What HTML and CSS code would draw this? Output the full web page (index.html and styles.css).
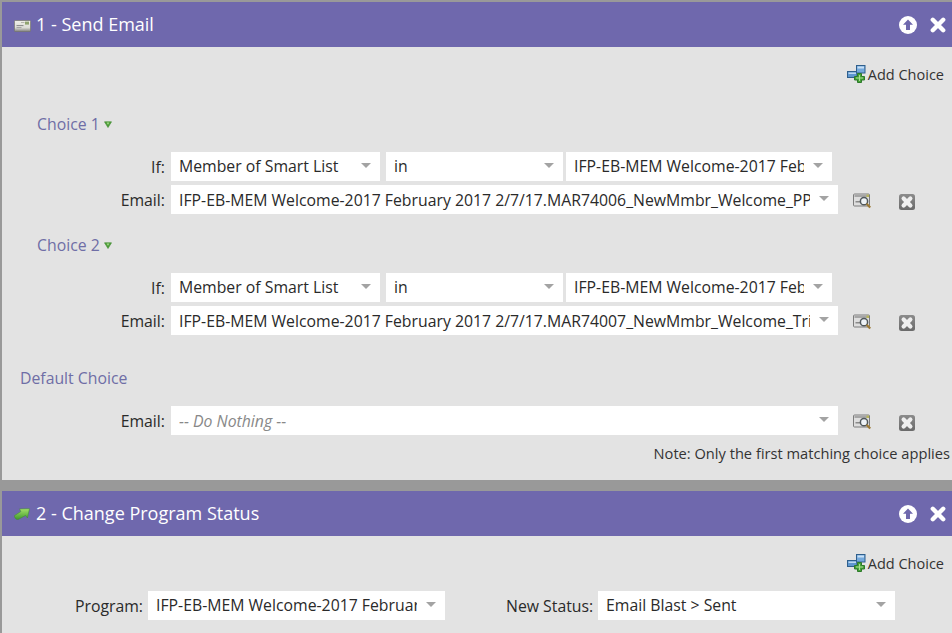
FILE: index.html
```html
<!DOCTYPE html>
<html lang="en">
<head>
<meta charset="utf-8">
<title>Flow steps</title>
<link rel="stylesheet" href="styles.css">
</head>
<body>
<svg class="defs" width="0" height="0" aria-hidden="true">
  <defs>
    <linearGradient id="g-del" x1="0" y1="0" x2="0" y2="1">
      <stop offset="0" stop-color="#8c8c8c"/>
      <stop offset="1" stop-color="#6a6a6a"/>
    </linearGradient>
    <linearGradient id="g-mail" x1="0" y1="0" x2="0" y2="1">
      <stop offset="0" stop-color="#f0f0ea"/>
      <stop offset="0.65" stop-color="#dcdcd6"/>
      <stop offset="1" stop-color="#7e7e7a"/>
    </linearGradient>
    <linearGradient id="g-arrow" x1="0" y1="0" x2="0" y2="1">
      <stop offset="0" stop-color="#a5e06a"/>
      <stop offset="1" stop-color="#3f9a2c"/>
    </linearGradient>
    <symbol id="i-add" viewBox="0 0 20 18">
      <rect x="0.5" y="6.5" width="9.5" height="6" fill="#5f97cf" stroke="#2f5f8c"/>
      <rect x="1.5" y="7.5" width="7.5" height="1.5" fill="#bcd8f2"/>
      <rect x="9.5" y="0.5" width="8.5" height="7.5" fill="#74a9dc" stroke="#2f5f8c"/>
      <rect x="10.5" y="1.5" width="6.5" height="2" fill="#c8e0f5"/>
      <path d="M10.5 8.5h4v3h3v3.5h-3v2.5h-4V15h-3v-3.5h3z" fill="#46a238" stroke="#2c7a2a"/>
      <path d="M12 10h1v2.5h3v1h-3V16h-1v-2.5H9v-1h3z" fill="#a9e092"/>
    </symbol>
    <symbol id="i-preview" viewBox="0 0 19 16">
      <rect x="0.5" y="1" width="16" height="12" rx="1" fill="#dedede" stroke="#7c7c7c"/>
      <rect x="1.5" y="2" width="14" height="2" fill="#a6a6a6"/>
      <rect x="2.5" y="8" width="5" height="1.5" fill="#8a8a8a"/>
      <circle cx="11" cy="8.2" r="3.6" fill="#eef3f6" stroke="#50585c" stroke-width="1.5"/>
      <rect x="13.5" y="1.5" width="2.5" height="2.5" fill="#b7b45e"/>
      <path d="M13.6 10.8l3.6 3.8" stroke="#9c7a35" stroke-width="2.2"/>
    </symbol>
    <symbol id="i-del" viewBox="0 0 16 16">
      <rect x="0" y="0" width="16" height="16" rx="2.5" fill="url(#g-del)"/>
      <path d="M4.6 4.6l6.8 6.8M11.4 4.6l-6.8 6.8" stroke="#efefef" stroke-width="4.2" stroke-linecap="round"/>
    </symbol>
    <symbol id="i-up" viewBox="0 0 18 18">
      <circle cx="9" cy="9" r="9" fill="#fff"/>
      <path d="M9 3.5l5 5.2h-3V14H7V8.7H4z" fill="#6f68ad"/>
    </symbol>
    <symbol id="i-close" viewBox="0 0 16 16">
      <path d="M2.8 2.8l10.4 10.4M13.2 2.8L2.8 13.2" stroke="#fff" stroke-width="4.4" stroke-linecap="round"/>
    </symbol>
    <symbol id="i-mail" viewBox="0 0 17 12">
      <rect x="0.4" y="0.4" width="16.2" height="11.2" rx="1.2" fill="url(#g-mail)" stroke="#77776f" stroke-width="0.8"/>
      <rect x="2.5" y="5" width="7" height="1.1" fill="#8f8f8f"/>
      <rect x="2.5" y="7" width="5" height="1.1" fill="#a5a5a5"/>
      <rect x="11" y="1.6" width="4" height="3" fill="#8fa36e"/>
      <rect x="7" y="2" width="3.5" height="1" fill="#b5b5ad"/>
    </symbol>
    <symbol id="i-status" viewBox="0 0 16 12">
      <path d="M0.5 7.6L6.8 3.6 5.6 0.9l9.9-.2L13.4 10l-1.8-2.6-7 3.9C2.4 12.2 0.2 9.8 0.5 7.6z" fill="url(#g-arrow)" stroke="#3c8f2a" stroke-width="0.5"/>
    </symbol>
    <symbol id="i-caret" viewBox="0 0 8 7">
      <path d="M0.5 0.8h7L4 6.5z" fill="#4f9e3a" stroke="#3d8a2e" stroke-width="0.6" stroke-linejoin="round"/>
      <path d="M2.6 1.6h2.8L4 3.8z" fill="#a5dc8c"/>
    </symbol>
  </defs>
</svg>

<main class="canvas">
  <section class="step step-one">
    <header class="step-head">
      <svg class="head-icon mail-icon"><use href="#i-mail"/></svg>
      <h2 class="step-title">1 - Send Email</h2>
      <svg class="head-up"><use href="#i-up"/></svg>
      <svg class="head-close"><use href="#i-close"/></svg>
    </header>
    <div class="step-body">
      <div class="add-row"><svg class="add-icon"><use href="#i-add"/></svg><span>Add Choice</span></div>

      <div class="choice-head">Choice 1<svg class="caret"><use href="#i-caret"/></svg></div>
      <div class="form-row row-if">
        <label class="field-label">If:</label>
        <div class="select sel-a"><span class="sel-text">Member of Smart List</span><i class="arrow"></i></div>
        <div class="select sel-b"><span class="sel-text">in</span><i class="arrow"></i></div>
        <div class="select sel-c"><span class="sel-text">IFP-EB-MEM Welcome-2017 February 2017</span><i class="arrow"></i></div>
      </div>
      <div class="form-row row-email">
        <label class="field-label">Email:</label>
        <div class="select sel-wide"><span class="sel-text">IFP-EB-MEM Welcome-2017 February 2017 2/7/17.MAR74006_NewMmbr_Welcome_PPC</span><i class="arrow"></i></div>
        <svg class="preview"><use href="#i-preview"/></svg>
        <svg class="del"><use href="#i-del"/></svg>
      </div>

      <div class="choice-head choice-two">Choice 2<svg class="caret"><use href="#i-caret"/></svg></div>
      <div class="form-row row-if">
        <label class="field-label">If:</label>
        <div class="select sel-a"><span class="sel-text">Member of Smart List</span><i class="arrow"></i></div>
        <div class="select sel-b"><span class="sel-text">in</span><i class="arrow"></i></div>
        <div class="select sel-c"><span class="sel-text">IFP-EB-MEM Welcome-2017 February 2017</span><i class="arrow"></i></div>
      </div>
      <div class="form-row row-email">
        <label class="field-label">Email:</label>
        <div class="select sel-wide"><span class="sel-text">IFP-EB-MEM Welcome-2017 February 2017 2/7/17.MAR74007_NewMmbr_Welcome_Trial</span><i class="arrow"></i></div>
        <svg class="preview"><use href="#i-preview"/></svg>
        <svg class="del"><use href="#i-del"/></svg>
      </div>

      <div class="default-head">Default Choice</div>
      <div class="form-row row-email row-default">
        <label class="field-label">Email:</label>
        <div class="select sel-wide"><span class="sel-text placeholder">-- Do Nothing --</span><i class="arrow"></i></div>
        <svg class="preview"><use href="#i-preview"/></svg>
        <svg class="del"><use href="#i-del"/></svg>
      </div>
      <div class="note">Note: Only the first matching choice applies</div>
    </div>
  </section>

  <section class="step step-two">
    <header class="step-head">
      <svg class="head-icon status-icon"><use href="#i-status"/></svg>
      <h2 class="step-title">2 - Change Program Status</h2>
      <svg class="head-up"><use href="#i-up"/></svg>
      <svg class="head-close"><use href="#i-close"/></svg>
    </header>
    <div class="step-body">
      <div class="add-row"><svg class="add-icon"><use href="#i-add"/></svg><span>Add Choice</span></div>
      <div class="program-row">
        <label class="program-label">Program:</label>
        <div class="select sel-program"><span class="sel-text">IFP-EB-MEM Welcome-2017 February 2017</span><i class="arrow"></i></div>
        <label class="status-label">New Status:</label>
        <div class="select sel-status"><span class="sel-text">Email Blast &gt; Sent</span><i class="arrow"></i></div>
      </div>
    </div>
  </section>
</main>
</body>
</html>
```

FILE: styles.css
```css
* { box-sizing: border-box; }
html, body { margin: 0; height: 100%; }
body {
  background: #999;
  font-family: "Open Sans", sans-serif;
  font-size: 15.8px;
  color: #2a2a2a;
  overflow: hidden;
}
.defs { position: absolute; }
.canvas {
  height: 633px;
  padding: 2px 0 0 2px;
  display: flex;
  flex-direction: column;
  gap: 11px;
  overflow: hidden;
}
.step { background: #e3e3e3; flex: none; }
.step-one { height: 478px; }
.step-two { flex: 1; }

.step-head {
  height: 45px;
  background: #6f68ad;
  display: flex;
  align-items: center;
  padding: 0 6px 0 12px;
  color: #fff;
}
.step-title {
  margin: 0 auto 0 5px;
  font-size: 18px;
  font-weight: 400;
  line-height: 45px;
}
.head-icon { flex: none; }
.mail-icon { width: 17px; height: 12px; margin-top: 3px; }
.status-icon { width: 16px; height: 12px; margin-right: 1px; }
.head-up { width: 18px; height: 18px; margin-right: 13px; }
.head-close { width: 16px; height: 16px; }

.add-row {
  display: flex;
  justify-content: flex-end;
  align-items: center;
  height: 24px;
  margin-top: 15px;
  padding-right: 8px;
  font-size: 14.5px;
  color: #333;
}
.add-icon { width: 20px; height: 18px; margin-right: 1px; }

.choice-head {
  margin: 26px 0 0 35px;
  height: 24px;
  line-height: 24px;
  color: #6f6ea6;
  display: flex;
  align-items: center;
}
.choice-two { margin-top: 19px; }
.caret { width: 8px; height: 7px; margin-left: 4px; }
.default-head {
  margin: 31px 0 0 18px;
  height: 24px;
  line-height: 24px;
  color: #6f6ea6;
}

.form-row {
  display: flex;
  align-items: center;
  height: 29px;
}
.row-if { margin-top: 16px; }
.row-email { margin-top: 4px; }
.row-email .select { line-height: 31px; }
.row-email.row-default { margin-top: 16px; }
.field-label {
  width: 163px;
  text-align: right;
  margin-right: 6px;
  flex: none;
}
.select {
  position: relative;
  height: 29px;
  line-height: 29px;
  background: #fff;
  padding: 0 28px 0 8px;
  flex: none;
}
.sel-text {
  display: block;
  height: 29px;
  overflow: hidden;
  white-space: nowrap;
}
.placeholder { color: #888; font-style: italic; }
.arrow {
  position: absolute;
  right: 9px;
  top: 11px;
  width: 0;
  height: 0;
  border-left: 5px solid transparent;
  border-right: 5px solid transparent;
  border-top: 5px solid #a3a3a3;
}
.sel-a { width: 209px; margin-right: 6px; }
.sel-b { width: 177px; margin-right: 3px; }
.sel-c { width: 266px; }
.sel-wide { width: 667px; }
.preview { width: 19px; height: 16px; margin-left: 15px; align-self: flex-start; margin-top: 8px; flex: none; }
.del { width: 16px; height: 16px; margin-left: 27px; align-self: flex-start; margin-top: 9px; flex: none; }

.note {
  margin-top: 8px;
  text-align: right;
  padding-right: 2px;
  font-size: 14.65px;
  color: #333;
}

.program-row {
  display: flex;
  align-items: center;
  height: 29px;
  margin-top: 16px;
}
.program-label { width: 141px; text-align: right; margin-right: 5px; flex: none; }
.sel-program { width: 297px; }
.status-label { width: 92px; margin-left: 61px; flex: none; }
.sel-status { width: 297px; }
```
